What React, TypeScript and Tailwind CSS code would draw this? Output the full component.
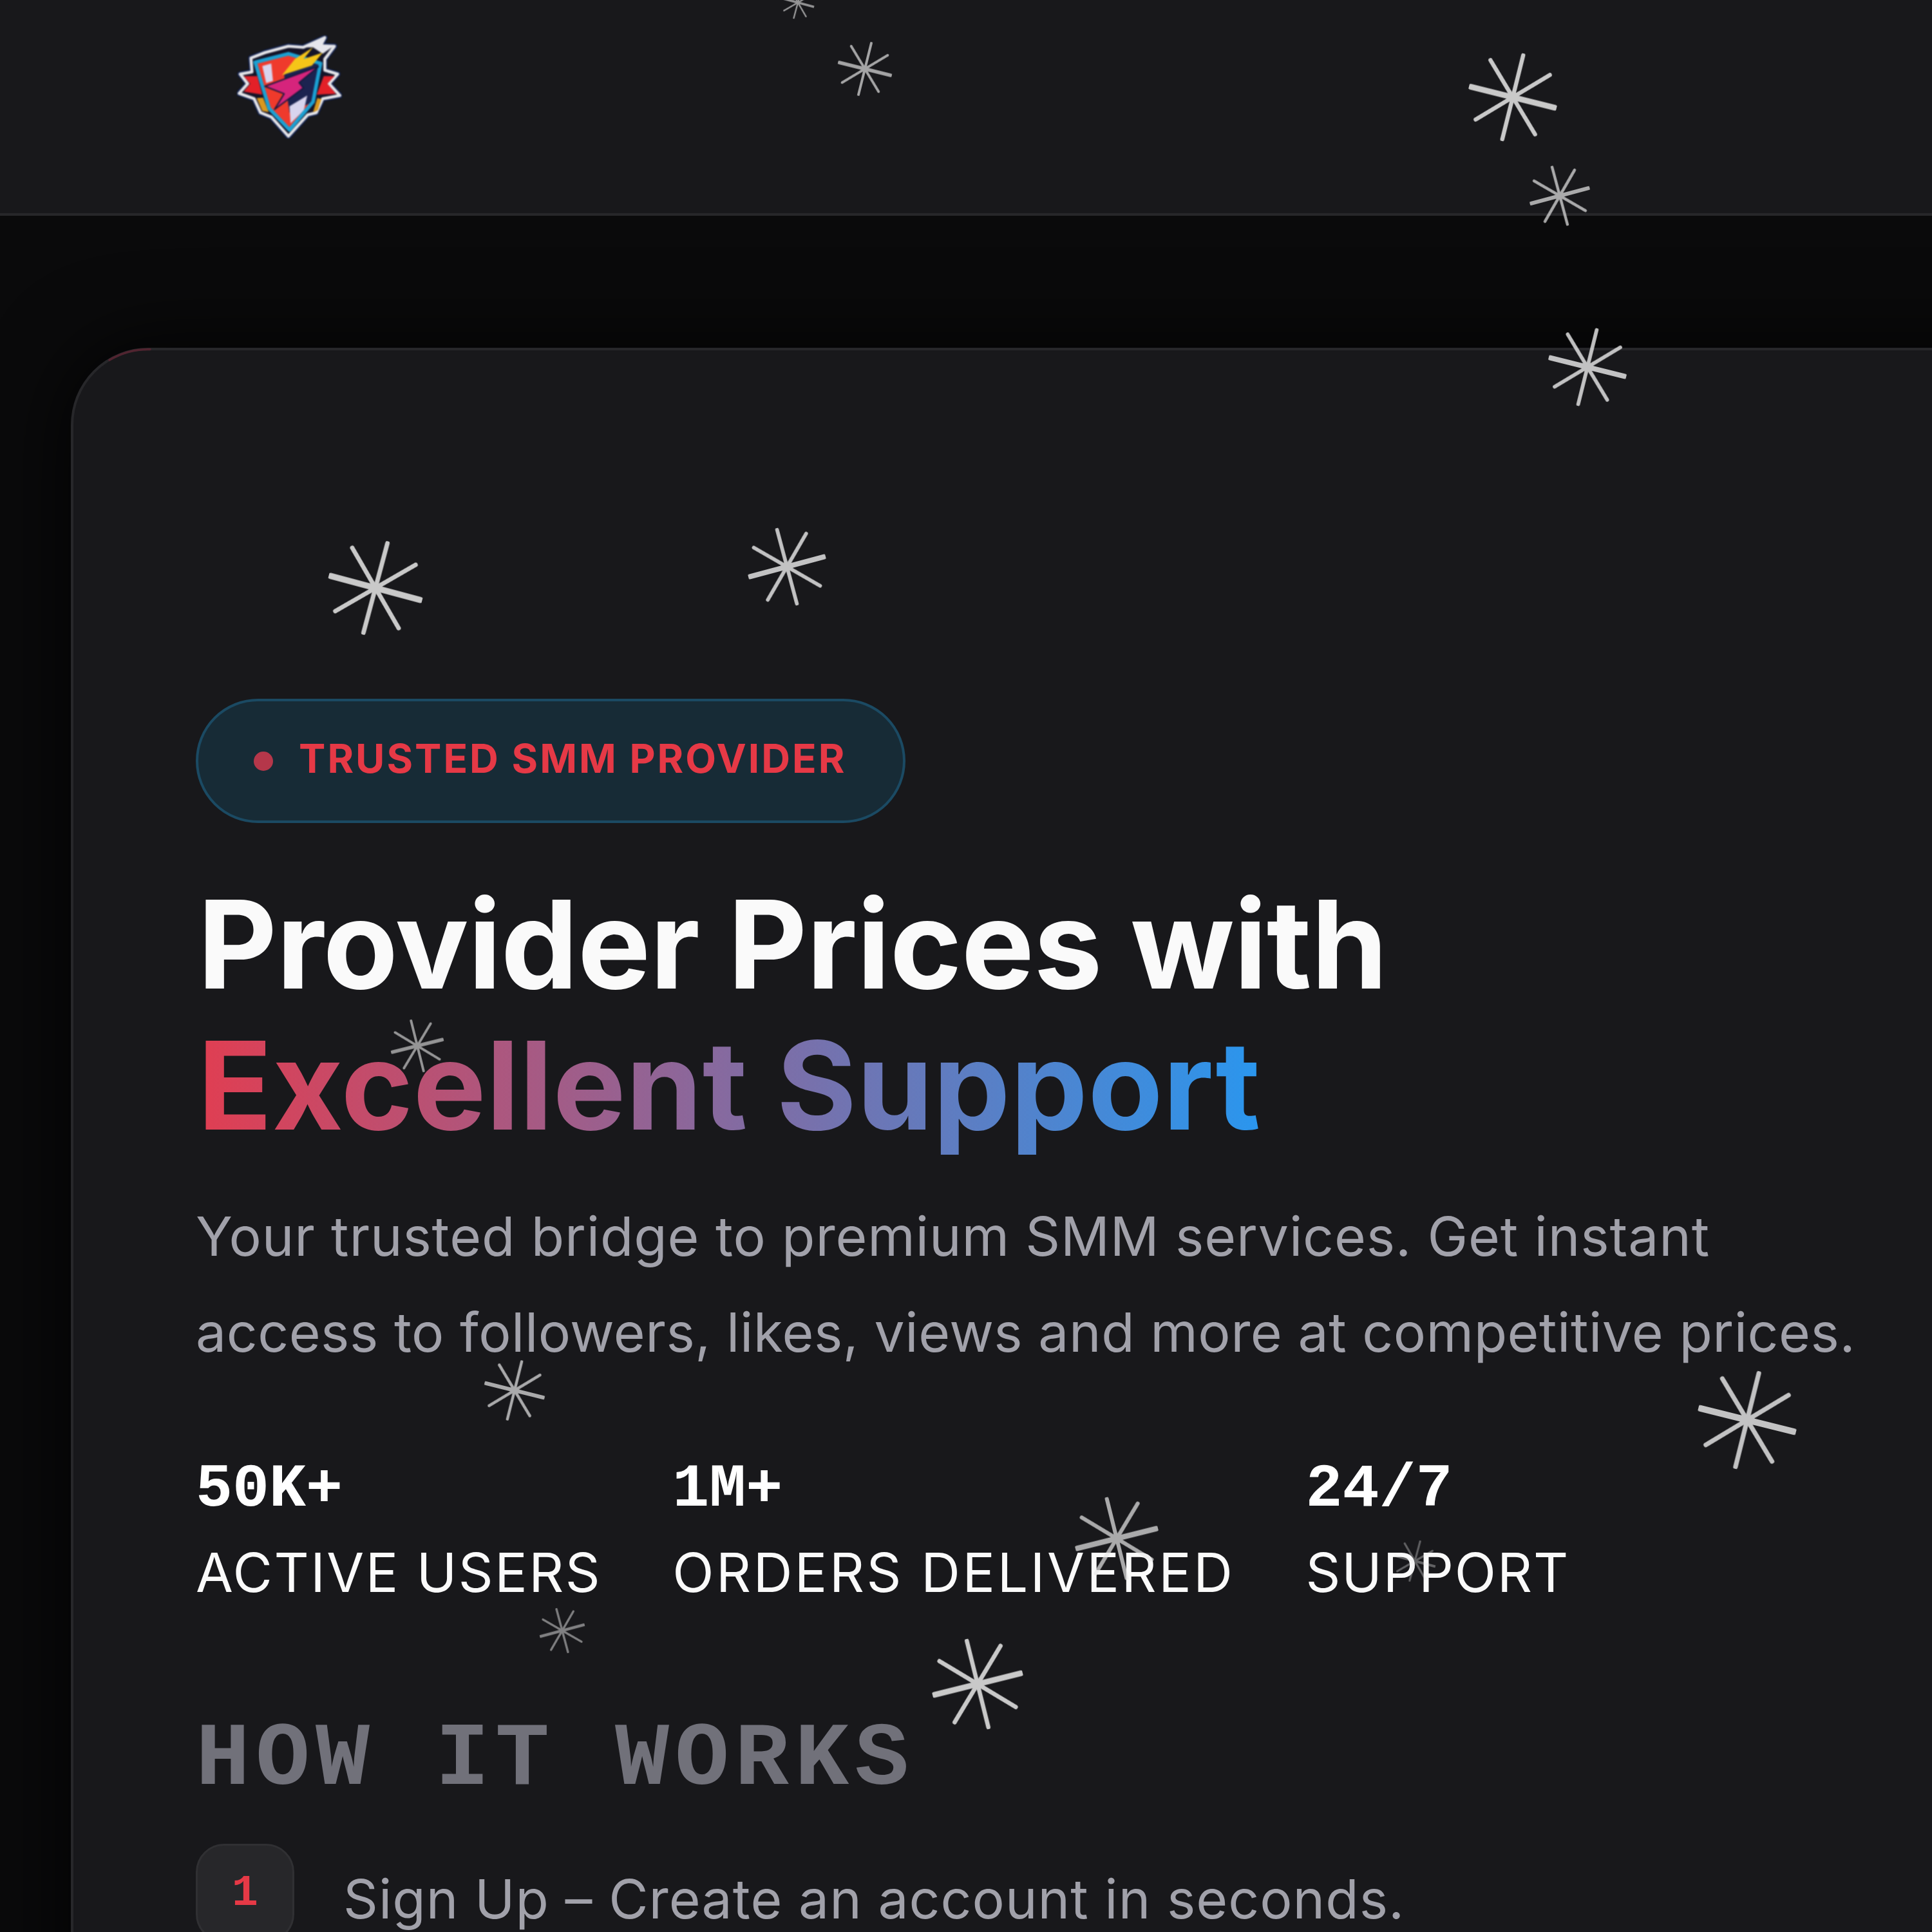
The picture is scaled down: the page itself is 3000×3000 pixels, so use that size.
const flakes = [
  { x: 1239, y: 4, r: 26, rot: 15, o: 0.6 },
  { x: 1343, y: 107, r: 43, rot: 14, o: 0.68 },
  { x: 2349, y: 151, r: 70, rot: 14, o: 0.85 },
  { x: 2422, y: 304, r: 48, rot: -15, o: 0.7 },
  { x: 2465, y: 570, r: 62, rot: 14, o: 0.82 },
  { x: 583, y: 913, r: 75, rot: 15, o: 0.85 },
  { x: 1222, y: 880, r: 62, rot: -15, o: 0.82 },
  { x: 648, y: 1624, r: 42, rot: -14, o: 0.6 },
  { x: 799, y: 2159, r: 48, rot: 14, o: 0.7 },
  { x: 2713, y: 2205, r: 78, rot: 14, o: 0.82 },
  { x: 1734, y: 2389, r: 66, rot: -14, o: 0.7 },
  { x: 2197, y: 2424, r: 33, rot: 15, o: 0.35 },
  { x: 873, y: 2532, r: 36, rot: -15, o: 0.5 },
  { x: 1518, y: 2615, r: 72, rot: -14, o: 0.85 },
];

function Flake({ x, y, r, rot, o }: { x: number; y: number; r: number; rot: number; o: number }) {
  return (
    <svg
      className="absolute pointer-events-none blur-[0.5px]"
      viewBox="-50 -50 100 100"
      width={r * 2}
      height={r * 2}
      style={{ left: x - r, top: y - r, opacity: o, transform: `rotate(${rot}deg)` }}
    >
      <g stroke="#e8e8e8" strokeLinecap="round">
        <line x1="-48" y1="0" x2="48" y2="0" strokeWidth="6.4" />
        <line x1="-48" y1="0" x2="48" y2="0" strokeWidth="4.6" transform="rotate(45)" />
        <line x1="-48" y1="0" x2="48" y2="0" strokeWidth="4.6" transform="rotate(90)" />
        <line x1="-48" y1="0" x2="48" y2="0" strokeWidth="4.6" transform="rotate(135)" />
      </g>
    </svg>
  );
}

function Logo() {
  const outline =
    "M265 265 L330 240 L440 210 L510 215 L610 170 L590 208 L655 210 L610 270 L610 322 L670 340 L630 385 L680 440 L600 455 L570 520 L530 530 L440 630 L360 540 L310 520 L280 455 L210 430 L250 385 L215 340 L270 330 Z";
  return (
    <svg viewBox="200 160 490 480" width="163" height="160" className="block blur-[0.8px]">
      <path d={outline} fill="#141428" stroke="#10204e" strokeWidth="26" strokeLinejoin="round" />
      <path d={outline} fill="#141428" stroke="#e6e6ea" strokeWidth="14" strokeLinejoin="round" />
      <path d="M232 350 L295 350 L318 436 L232 422 L262 385 Z" fill="#e32028" />
      <path d="M605 350 L655 350 L622 385 L662 432 L572 436 Z" fill="#e32028" />
      <path d="M292 452 L322 450 L348 518 L318 512 Z" fill="#d9981e" />
      <path d="M555 518 L575 452 L594 456 L578 508 Z" fill="#d9981e" />
      <path d="M285 285 L440 245 L590 290 L555 470 L445 600 L350 500 Z" fill="#ef3a2c" />
      <path d="M420 345 L500 262 L590 290 L555 470 L445 520 Z" fill="#1b2350" />
      <path d="M318 302 L360 290 L368 372 L336 382 Z" fill="#d8d4ee" />
      <path d="M445 490 L528 440 L512 510 L450 570 Z" fill="#d8d4ee" />
      <path d="M285 285 L440 245 L590 290 L555 470 L445 600 L350 500 Z" fill="none" stroke="#1ba0d2" strokeWidth="17" strokeLinejoin="round" />
      <path d="M510 215 L610 172 L590 205 L650 210 L600 245 L555 215 Z" fill="#e6e6ec" />
      <path d="M410 345 L470 270 L555 215 L510 270 L600 240 L550 300 Z" fill="#f5c518" />
      <path d="M330 397 L580 305 L490 380 L510 405 L375 505 L420 432 Z" fill="#d6247c" stroke="#14183c" strokeWidth="6" strokeLinejoin="round" />
    </svg>
  );
}

const stats = [
  { value: "50K+", label: "ACTIVE USERS", tracking: "tracking-[2.5px]" },
  { value: "1M+", label: "ORDERS DELIVERED", tracking: "tracking-[3.6px]" },
  { value: "24/7", label: "SUPPORT", tracking: "tracking-[1.9px]" },
];

export default function App() {
  return (
    <div className="relative w-[3000px] h-[3000px] overflow-hidden bg-[#0a0a0b] font-['Inter','Liberation_Sans',sans-serif]">
      <header className="h-[335px] bg-[#18181b] border-b-[4px] border-[#27272a] pl-[368px] pt-[55px]">
        <Logo />
      </header>
      <main className="pl-[110px] pt-[205px]">
        <section className="relative w-[3200px] h-[2600px] bg-[#18181b] border-[4px] border-[#27272a] rounded-tl-[120px] pl-[190px] pt-[541px] shadow-[0_0_130px_rgba(0,0,0,0.85)]">
          <svg className="absolute left-[-4px] top-[-4px]" width="140" height="40" viewBox="0 0 140 40">
            <path d="M60 19 A118 118 0 0 1 123 2.5" fill="none" stroke="#512430" strokeWidth="3.5" strokeLinecap="round" />
          </svg>
          <div className="inline-flex items-center h-[193px] rounded-full bg-[#172b36] border-[4px] border-[#1b4a63] pl-[86px] pr-[88px]">
            <span className="w-[30px] h-[30px] rounded-full bg-[#b5374a] mr-[40px]" />
            <span className="mb-[8px] text-[62px] font-bold tracking-[3px] text-[#e63946] leading-none">TRUSTED SMM PROVIDER</span>
          </div>
          <h1 className="mt-[79px] text-[190px] leading-[219px] font-bold text-[#fafafa]">
            <span className="block pl-[3px] tracking-[-0.7px]">Provider Prices with</span>
            <span className="block pl-[3px] tracking-[0.3px]">
              <span className="bg-[linear-gradient(90deg,#e03e52,#2a96ee)] bg-clip-text text-transparent">Excellent Support</span>
            </span>
          </h1>
          <p className="mt-[50px] text-[84px] leading-[149px] text-[#a1a1aa]">
            <span className="block tracking-[0.85px]">Your trusted bridge to premium SMM services. Get instant</span>
            <span className="block tracking-[0.5px]">access to followers, likes, views and more at competitive prices.</span>
          </p>
          <div className="mt-[115px] flex gap-[110px]">
            {stats.map((s) => (
              <div key={s.label}>
                <div className="font-['Liberation_Mono',monospace] font-bold text-[95px] leading-[110px] text-white">{s.value}</div>
                <div className={`mt-[24px] text-[84px] leading-[100px] text-[#fafafa] ${s.tracking}`}>{s.label}</div>
              </div>
            ))}
          </div>
          <h2 className="mt-[181px] font-['Liberation_Mono',monospace] font-bold text-[140px] leading-[120px] tracking-[9px] text-[#71717a]">
            HOW IT WORKS
          </h2>
          <div className="mt-[70px] flex items-start gap-[76px]">
            <div className="w-[153px] h-[153px] shrink-0 flex items-center justify-center rounded-[44px] bg-[#27272a] border-[3px] border-[#303033] font-['Liberation_Mono',monospace] font-bold text-[68px] text-[#e63946]">
              1
            </div>
            <p className="pt-[11px] text-[84px] leading-[149px] tracking-[1px] text-[#a1a1aa]">Sign Up – Create an account in seconds.</p>
          </div>
        </section>
      </main>
      {flakes.map((f, i) => (
        <Flake key={i} {...f} />
      ))}
    </div>
  );
}
